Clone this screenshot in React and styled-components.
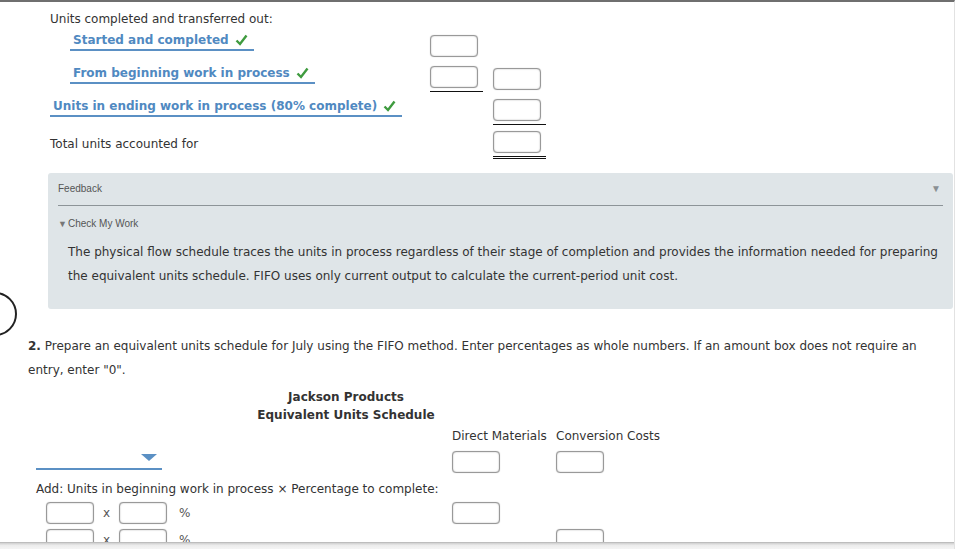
import React from 'react';
import styled, { createGlobalStyle } from 'styled-components';

const GlobalStyle = createGlobalStyle`
  html, body {
    margin: 0;
    padding: 0;
    background: #fff;
    overflow: hidden;
  }
  body {
    font-family: "DejaVu Sans", Verdana, sans-serif;
    font-size: 12px;
    color: #333;
  }
`;

const Page = styled.div`
  position: relative;
  width: 955px;
  height: 549px;
  border-top: 2px solid #6f6f6f;
  border-right: 1px solid #e2e2e2;
  box-sizing: border-box;
  overflow: hidden;
`;

const Section = styled.div`
  padding-left: 50px;
`;

const Row = styled.div`
  display: grid;
  grid-template-columns: 370px 53px 53px;
  column-gap: 10px;
  height: ${p => p.$h}px;
  align-items: start;
`;

const PlainLabel = styled.div`
  line-height: 18px;
  margin-top: ${p => p.$top || 0}px;
`;

const LabelCell = styled.div`
  padding-left: ${p => p.$indent || 0}px;
  margin-top: ${p => p.$top || 0}px;
`;

const LinkLabel = styled.span`
  display: inline-flex;
  align-items: center;
  gap: 6px;
  font-weight: bold;
  color: #5089c1;
  line-height: 18px;
  padding: 0 6px 0 3px;
  border-bottom: 2px solid #5b90c4;
`;

const Cell = styled.div`
  margin-top: ${p => p.$top || 0}px;
  padding-bottom: ${p => (p.$line ? 3 : 0)}px;
  border-bottom: ${p =>
    p.$line === 'double' ? '3px double #111' : p.$line ? '1px solid #111' : 'none'};
`;

const Box = styled.div`
  width: 48px;
  height: 22px;
  box-sizing: border-box;
  border: 1px solid #999;
  border-radius: 4px;
  box-shadow: inset 0 0 1.5px #999, 0 0 1px #bbb;
  background: #fff;
`;

const Check = () => (
  <svg width="13" height="12" viewBox="0 0 13 12">
    <path d="M1.5 6.5 L5 10 L11.5 1.5" fill="none" stroke="#3f9b3f" strokeWidth="2.4" />
  </svg>
);

const Panel = styled.div`
  margin: 11px 0 0 48px;
  width: 905px;
  box-sizing: border-box;
  background: #dfe5e8;
  border-radius: 3px;
  padding: 7px 10px 21px;
  font-family: "Liberation Sans", Arial, sans-serif;
`;

const PanelHead = styled.div`
  display: flex;
  justify-content: space-between;
  align-items: center;
  height: 16px;
  padding-bottom: 9px;
  border-bottom: 1px solid #8d9498;
  font-size: 10px;
  color: #555;
`;

const Caret = styled.span`
  font-size: 10px;
  color: #8a8f93;
  padding-right: 2px;
`;

const SubHead = styled.div`
  margin-top: 10px;
  line-height: 16px;
  font-size: 10px;
  color: #555;
  span {
    font-size: 9px;
    color: #777;
    margin-right: 1px;
  }
`;

const PanelBody = styled.p`
  margin: 8px 0 0 10px;
  font-family: "DejaVu Sans", Verdana, sans-serif;
  font-size: 12px;
  line-height: 24px;
  color: #333;
`;

const Circle = styled.div`
  position: absolute;
  left: -27px;
  top: 290px;
  width: 40px;
  height: 40px;
  border: 2.5px solid #222;
  border-radius: 50%;
`;

const Question = styled.p`
  margin: 25px 0 0 28px;
  width: 910px;
  line-height: 24px;
  color: #333;
`;

const Title = styled.div`
  width: 636px;
  margin: 6px 0 0 28px;
  text-align: center;
  font-weight: bold;
  line-height: 18px;
  color: #333;
`;

const Schedule = styled.div`
  padding-left: 36px;
`;

const SRow = styled.div`
  display: grid;
  grid-template-columns: 416px 104px 110px;
  height: ${p => p.$h}px;
  align-items: start;
`;

const Head = styled.div`
  line-height: 18px;
  margin-top: ${p => p.$top || 0}px;
`;

const Dropdown = styled.div`
  position: relative;
  width: 126px;
  height: 17px;
  border-bottom: 2px solid #5b90c4;
  &::after {
    content: '';
    position: absolute;
    right: 5px;
    top: 3px;
    border-left: 8px solid transparent;
    border-right: 8px solid transparent;
    border-top: 7px solid #5b90c4;
  }
`;

const InlineInputs = styled.div`
  display: flex;
  align-items: center;
  padding-left: 10px;
  color: #555;
  span.x {
    width: 25px;
    text-align: center;
  }
  span.pct {
    margin-left: 12px;
  }
`;

const BottomShade = styled.div`
  position: absolute;
  left: 0;
  right: 0;
  bottom: 0;
  height: 6px;
  background: linear-gradient(#cfcfcf, #ececec 40%, #f4f4f4);
  border-top: 1px solid #bdbdbd;
`;

export default function App() {
  return (
    <>
      <GlobalStyle />
      <Page>
        <Section>
          <Row $h={28}>
            <PlainLabel $top={8}>Units completed and transferred out:</PlainLabel>
          </Row>
          <Row $h={32}>
            <LabelCell $indent={20} $top={1}>
              <LinkLabel>Started and completed <Check /></LinkLabel>
            </LabelCell>
            <Cell $top={5}><Box /></Cell>
          </Row>
          <Row $h={33}>
            <LabelCell $indent={20} $top={2}>
              <LinkLabel>From beginning work in process <Check /></LinkLabel>
            </LabelCell>
            <Cell $top={4} $line><Box /></Cell>
            <Cell $top={6}><Box /></Cell>
          </Row>
          <Row $h={33}>
            <LabelCell $top={2}>
              <LinkLabel>Units in ending work in process (80% complete) <Check /></LinkLabel>
            </LabelCell>
            <div />
            <Cell $top={4} $line><Box /></Cell>
          </Row>
          <Row $h={34}>
            <PlainLabel $top={7}>Total units accounted for</PlainLabel>
            <div />
            <Cell $top={3} $line="double"><Box /></Cell>
          </Row>
        </Section>

        <Panel>
          <PanelHead>
            <span>Feedback</span>
            <Caret>▼</Caret>
          </PanelHead>
          <SubHead><span>▼</span>Check My Work</SubHead>
          <PanelBody>
            The physical flow schedule traces the units in process regardless of their stage of completion and provides the information needed for preparing the equivalent units schedule. FIFO uses only current output to calculate the current-period unit cost.
          </PanelBody>
        </Panel>

        <Circle />

        <Question>
          <b>2.</b> Prepare an equivalent units schedule for July using the FIFO method. Enter percentages as whole numbers. If an amount box does not require an entry, enter "0".
        </Question>

        <Title>
          Jackson Products
          <br />
          Equivalent Units Schedule
        </Title>

        <Schedule>
          <SRow $h={27}>
            <div />
            <Head $top={3}>Direct Materials</Head>
            <Head $top={3}>Conversion Costs</Head>
          </SRow>
          <SRow $h={29}>
            <Dropdown />
            <Box />
            <Box />
          </SRow>
          <SRow $h={22}>
            <Head>Add: Units in beginning work in process × Percentage to complete:</Head>
          </SRow>
          <SRow $h={27}>
            <InlineInputs>
              <Box /><span className="x">x</span><Box /><span className="pct">%</span>
            </InlineInputs>
            <Box />
          </SRow>
          <SRow $h={27}>
            <InlineInputs>
              <Box /><span className="x">x</span><Box /><span className="pct">%</span>
            </InlineInputs>
            <div />
            <Box />
          </SRow>
        </Schedule>

        <BottomShade />
      </Page>
    </>
  );
}
